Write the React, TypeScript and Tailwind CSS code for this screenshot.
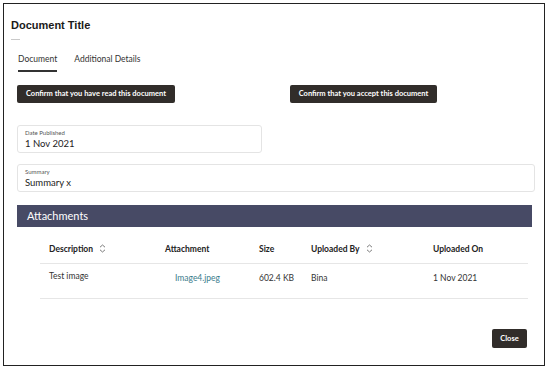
import React from 'react';

const SANS = { fontFamily: 'Lato, "Noto Sans", sans-serif' };

function SortIcon() {
  return (
    <svg width="7" height="9" viewBox="0 0 7 9" className="ml-[6px] inline-block align-[-1px]" fill="none">
      <path d="M1 3.2 3.5 1 6 3.2M1 5.8 3.5 8 6 5.8" stroke="#6b6b6b" strokeWidth="0.9" />
    </svg>
  );
}

type Row = {
  description: string;
  attachment: string;
  size: string;
  uploadedBy: string;
  uploadedOn: string;
};

const ROWS: Row[] = [
  {
    description: 'Test image',
    attachment: 'Image4.jpeg',
    size: '602.4 KB',
    uploadedBy: 'Bina',
    uploadedOn: '1 Nov 2021',
  },
];

function Field({ label, value, className }: { label: string; value: string; className: string }) {
  return (
    <div className={`rounded-[3px] border border-[#e4e4e4] bg-white px-[7px] pt-[3px] pb-[2px] ${className}`}>
      <p className="text-[6px] leading-[8px] text-[#555]">{label}</p>
      <p className="text-[9.5px] leading-[13px] text-[#222]">{value}</p>
    </div>
  );
}

export default function App() {
  return (
    <div className="h-[369px] w-[548px] bg-white p-[3px]" style={SANS}>
      <div className="flex h-full flex-col border border-[#222] bg-white pl-[13px] pr-[9px]">
        <div className="-ml-[6px] pt-[14px]">
          <h1
            className="text-[11px] font-bold leading-[14px] text-[#1a1a1a]"
            style={{ fontFamily: '"Liberation Sans", Arial, sans-serif' }}
          >
            Document Title
          </h1>
          <div className="mt-[7px] h-px w-[9px] bg-[#c9c9c9]" />
        </div>

        <div className="mt-[13px] flex gap-[17px] pl-[1px] text-[8.5px] text-[#333]">
          <div className="flex flex-col">
            <span className="leading-[12px]">Document</span>
            <span className="mt-[5px] h-[2px] w-full bg-[#333]" />
          </div>
          <span className="leading-[12px]">Additional Details</span>
        </div>

        <div className="mt-[13px] flex">
          <button className="flex h-[18px] w-[158px] items-center justify-center rounded-[2px] bg-[#312d2a] text-[7.5px] font-bold text-white">
            Confirm that you have read this document
          </button>
          <button className="ml-[115px] flex h-[18px] w-[147px] items-center justify-center rounded-[2px] bg-[#312d2a] text-[7.5px] font-bold text-white">
            Confirm that you accept this document
          </button>
        </div>

        <Field label="Date Published" value="1 Nov 2021" className="mt-[22px] w-[245px]" />
        <Field label="Summary" value="Summary x" className="mt-[11px] w-[518px]" />

        <div className="mt-[13px] flex h-[22px] w-[515px] items-center bg-[#474a65] pl-[10px] text-[11px] text-white">
          Attachments
        </div>

        <table className="mt-[16px] ml-[23px] w-[488px] table-fixed text-left">
          <thead>
            <tr className="border-b border-[#e6e6e6] text-[8.5px] text-[#222]">
              <th className="w-[125px] pl-[9px] pb-[7px] font-bold">
                Description
                <SortIcon />
              </th>
              <th className="w-[94px] pb-[7px] font-bold">Attachment</th>
              <th className="w-[52px] pb-[7px] font-bold">Size</th>
              <th className="w-[122px] pb-[7px] font-bold">
                Uploaded By
                <SortIcon />
              </th>
              <th className="pb-[7px] font-bold">Uploaded On</th>
            </tr>
          </thead>
          <tbody>
            {ROWS.map((row) => (
              <tr key={row.attachment} className="border-b border-[#e6e6e6] align-top text-[8.5px] text-[#333]">
                <td className="h-[35px] pl-[9px] pt-[6px]">{row.description}</td>
                <td className="pl-[10px] pt-[8px] text-[#3a7d8c]">{row.attachment}</td>
                <td className="pt-[8px]">{row.size}</td>
                <td className="pt-[8px]">{row.uploadedBy}</td>
                <td className="pt-[8px]">{row.uploadedOn}</td>
              </tr>
            ))}
          </tbody>
        </table>

        <div className="mt-auto mb-[17px] flex justify-end pr-[8px]">
          <button className="flex h-[19px] w-[35px] items-center justify-center rounded-[2px] bg-[#312d2a] text-[7.5px] font-bold text-white">
            Close
          </button>
        </div>
      </div>
    </div>
  );
}
